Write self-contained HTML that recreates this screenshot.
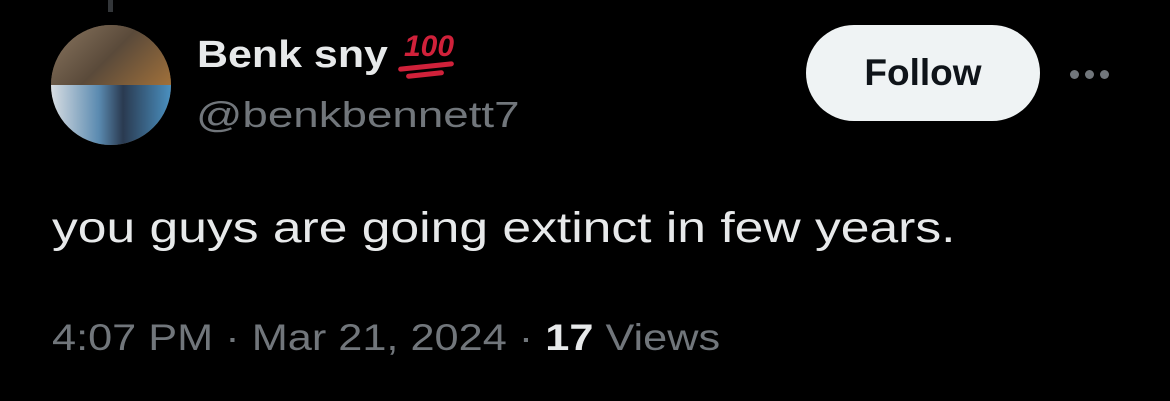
<html><head><style>
body{margin:0;background:#000;width:1170px;height:401px;overflow:hidden;font-family:"Liberation Sans",sans-serif;position:relative}
.a{position:absolute;transform-origin:0 0;white-space:nowrap}
.d{position:absolute;top:70px;width:9px;height:9px;border-radius:50%;background:#71767b}
</style></head><body>
<div class="a" style="left:108px;top:0;width:5px;height:12px;background:#333639"></div>
<div class="a" style="left:51px;top:25px;width:120px;height:120px;border-radius:50%;overflow:hidden;background:#6b5a48">
<div style="height:60px;background:linear-gradient(135deg,#8a7660,#5a4a3a 50%,#a0703a)"></div>
<div style="height:60px;background:linear-gradient(90deg,#d8dde2,#5a8ab0 40%,#2a3a50 60%,#4a90c0)"></div>
</div>
<div class="a" style="left:197px;top:34px;font-size:38px;font-weight:bold;color:#e7e9ea;transform:scaleX(1.13)">Benk sny</div>
<div class="a" style="left:404px;top:32px;color:#d0213a;font-style:italic;font-weight:bold;font-size:30px;line-height:30px">100<div style="width:56px;height:5px;background:#d0213a;border-radius:3px;transform:rotate(-6deg);margin-top:2px;margin-left:-6px"></div><div style="width:38px;height:5px;background:#d0213a;border-radius:3px;transform:rotate(-6deg);margin-top:3px;margin-left:2px"></div></div>
<div class="a" style="left:196px;top:94px;font-size:36px;color:#71767b;transform:scaleX(1.27)">@benkbennett7</div>
<div class="a" style="left:806px;top:25px;width:234px;height:96px;border-radius:48px;background:#eff3f4;color:#0f1419;font-weight:bold;font-size:37px;line-height:96px;text-align:center">Follow</div>
<div class="d" style="left:1070px"></div><div class="d" style="left:1085px"></div><div class="d" style="left:1100px"></div>
<div class="a" style="left:52px;top:204px;font-size:43px;color:#e7e9ea;transform:scaleX(1.2)">you guys are going extinct in few years.</div>
<div class="a" style="left:52px;top:317px;font-size:37px;color:#71767b;transform:scaleX(1.17)">4:07 PM · Mar 21, 2024 · <b style="color:#e7e9ea">17</b> Views</div>
</body></html>
